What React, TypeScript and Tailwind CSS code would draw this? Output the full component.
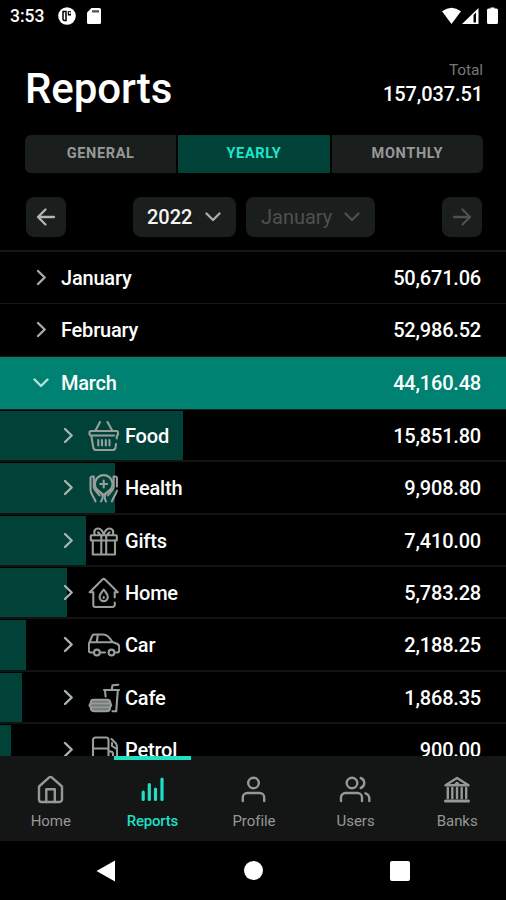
import type { ReactNode } from 'react';

const months = [
  { name: 'January', total: '50,671.06' },
  { name: 'February', total: '52,986.52' },
];

const stroke = {
  fill: 'none',
  stroke: 'currentColor',
  strokeWidth: 2.1,
  strokeLinecap: 'round' as const,
  strokeLinejoin: 'round' as const,
};

function CategoryIcon({ children }: { children: ReactNode }) {
  return (
    <svg width="32" height="32" viewBox="0 0 32 32" {...stroke} className="shrink-0 text-[#979e9c]">
      {children}
    </svg>
  );
}

const categories = [
  {
    name: 'Food',
    total: '15,851.80',
    bar: 183,
    icon: (
      <CategoryIcon>
        <path d="M12 2L7.500 10.500M19.500 2L24.200 10.500" />
        <path d="M28.800 18.500V16L30 14.500V12.500A1.500 1.500 0 0 0 28.500 11H3A1.500 1.500 0 0 0 1.500 12.500V14A1.500 1.500 0 0 0 3 15.500H26" />
        <path d="M3.300 16L5.300 27.500A3 3 0 0 0 8 30H24.500A3 3 0 0 0 27.500 27.500L28 24" />
        <path d="M10.300 20V25.500M14 20V25.500M17.800 20V25.500M21.500 20V25.500" />
      </CategoryIcon>
    ),
  },
  {
    name: 'Health',
    total: '9,908.80',
    bar: 115,
    icon: (
      <CategoryIcon>
        <path d="M8.500 17A8.800 8.800 0 1 1 22.900 17C21.500 19.500 18.500 20.500 15.700 23C12.900 20.500 9.900 19.500 8.500 17" />
        <path d="M15.700 8.500V15.500M12.200 12H19.200" />
        <path d="M5.800 4.500H4.200Q2.500 4.500 2.500 6.200V18C2.500 22 6 24.500 7.500 29.500M5.800 4.500V15C5.800 17.500 9 20 11.500 23.500M8.500 17L13.500 21.500C15.500 24 15 26.500 13 29.500" />
        <path d="M25.600 4.500H27.200Q28.900 4.500 28.900 6.200V14.500M28.900 18.500C28.500 22 25.400 24.500 23.900 29.500M25.600 4.500V15C25.600 17.500 22.400 20 19.900 23.500M22.900 17L17.900 21.500C15.900 24 16.400 26.500 18 29.500" />
      </CategoryIcon>
    ),
  },
  {
    name: 'Gifts',
    total: '7,410.00',
    bar: 86,
    icon: (
      <CategoryIcon>
        <rect x="2.800" y="10.300" width="26" height="5.200" rx=".6" />
        <path d="M4.800 15.500V29.500H27V15.500M13.300 10.500V29.500M18.200 10.500V29.500" />
        <path d="M7 10C5 6 7.500 3.200 10.500 3.500C13.500 4 15 7 15.700 9.800C16.500 7 18 4 21 3.500C24 3.200 26.500 6 24.500 10M10 7.300L12.500 10M21.500 7.300L19 10" />
      </CategoryIcon>
    ),
  },
  {
    name: 'Home',
    total: '5,783.28',
    bar: 67,
    icon: (
      <CategoryIcon>
        <path d="M5.300 15.200V28A2 2 0 0 0 7.300 30H24.500A2.300 2.300 0 0 0 26.800 27.700V25.500M26.700 20.500V15.200H29.800L17 2.500A1.900 1.900 0 0 0 14.400 2.500L1.700 15.200H5" />
        <path d="M15.700 12.500C13.500 15.500 11.600 17.300 11.600 20A4.100 4.100 0 0 0 19.800 20C19.800 17.300 17.900 15.500 15.700 12.500Z" />
        <path d="M15.700 20V21" />
      </CategoryIcon>
    ),
  },
  {
    name: 'Car',
    total: '2,188.25',
    bar: 26,
    icon: (
      <CategoryIcon>
        <path d="M5.500 23.500H2.500A2 2 0 0 1 .8 21.500V15L4.200 6.800A2 2 0 0 1 6 5.500H15.500C18.500 5.500 22 9 24.500 13L29 14.700C30.500 15.400 31.200 16.200 31.200 17.700V21.500A2 2 0 0 1 29.200 23.500H27M12.500 23.500H17M1.500 13.300H24M9.800 5.700L8.800 13" />
        <circle cx="8.900" cy="23.500" r="2.900" />
        <circle cx="23.500" cy="23.500" r="2.900" />
      </CategoryIcon>
    ),
  },
  {
    name: 'Cafe',
    total: '1,868.35',
    bar: 22,
    icon: (
      <CategoryIcon>
        <path d="M16 8H31M23.700 8L24.500 3.300L30.300 2.800M29.800 8.500L28.200 29.300H24.500M17 8.500L17.600 14.500" />
        <path d="M5.500 17.800H19C21 17.800 22.300 19 22.300 21L23.200 23.300L22 25.500C22 28 20.500 29.300 18.500 29.300H6.500C4 29.300 2.800 28 2.800 25.500L1.500 23.300L2.800 21C2.800 19 3.800 17.800 5.500 17.800Z" fill="#777c7b" />
        <path d="M3 21.500H22M3 25.300H22" strokeWidth="1.300" />
      </CategoryIcon>
    ),
  },
  {
    name: 'Petrol',
    total: '900.00',
    bar: 11,
    icon: (
      <CategoryIcon>
        <path d="M5 31V6A2.500 2.500 0 0 1 7.500 3.500H18A2.500 2.500 0 0 1 20.500 6V31M5 14.500H20.500" />
        <path d="M23.500 5L28 9.500C29 11 29 12 29 14V27M21 17.500H22.500A2.500 2.500 0 0 1 25 20V27M24 9V12L28.500 15" />
      </CategoryIcon>
    ),
  },
];

const tabs = [
  {
    label: 'Home',
    icon: (
      <>
        <path d="M3 11.500L13.500 2.200Q14.500 1.500 15.500 2.200L26 11.500V24.500A2.500 2.500 0 0 1 23.500 27H5.500A2.500 2.500 0 0 1 3 24.500Z" />
        <path d="M10.300 27V14.300H18.800V27" />
      </>
    ),
  },
  {
    label: 'Reports',
    icon: <path d="M5.200 17V24.500M11.300 9.600V24.500M17.500 14V24.500M24 4V24.500" strokeWidth="3.200" />,
  },
  {
    label: 'Profile',
    icon: (
      <>
        <circle cx="14.500" cy="8" r="5.300" />
        <path d="M3.800 26V22.500A4.500 4.500 0 0 1 8.300 18H20.700A4.500 4.500 0 0 1 25.200 22.500V26" />
      </>
    ),
  },
  {
    label: 'Users',
    icon: (
      <>
        <circle cx="11" cy="8" r="5.300" />
        <path d="M0 26V22.500A4.500 4.500 0 0 1 4.500 18H16.500A4.500 4.500 0 0 1 21 22.500V26M19.700 3A5.300 5.300 0 0 1 19.700 13M24.500 18.300C27 19.200 28.300 21 28.300 23.500V26" />
      </>
    ),
  },
  {
    label: 'Banks',
    icon: (
      <>
        <path d="M2.500 10.300L14 3L25.500 10.300Z" />
        <path d="M11 10L14 7.300L17 10" strokeWidth="1.500" />
        <path d="M4.800 13V23M9.300 13V23M14 13V23M18.700 13V23M23.200 13V23" strokeWidth="2.400" />
        <path d="M2.500 26H25.500" strokeWidth="3" />
      </>
    ),
  },
];

function Chevron({ down = false, className = '' }: { down?: boolean; className?: string }) {
  return (
    <svg width="18" height="18" viewBox="0 0 18 18" {...stroke} strokeWidth={2.4} className={`shrink-0 ${className}`}>
      <path d={down ? 'M2.500 5.500L9 12L15.500 5.500' : 'M6 2L12.700 8.500L6 15'} />
    </svg>
  );
}

function Arrow({ right = false }: { right?: boolean }) {
  return (
    <svg width="20" height="20" viewBox="0 0 20 20" {...stroke} strokeWidth={2.3}>
      <path d={right ? 'M2 10H18M10.500 2.500L18 10L10.500 17.500' : 'M18 10H2M9.500 2.500L2 10L9.500 17.500'} />
    </svg>
  );
}

function StatusBar() {
  return (
    <div className="flex h-8 shrink-0 items-center pl-[10px] pr-2">
      <span className="w-12 text-[17.5px] font-medium leading-8">3:53</span>
      <svg width="18" height="18" viewBox="0 0 18 18" className="-mt-px">
        <circle cx="9" cy="9" r="8.800" fill="#fff" />
        <path d="M5 4.500H8V13.500H6.500Q5 13.500 5 12Z" fill="none" stroke="#000" strokeWidth="1.500" />
        <path d="M9.800 4.200H13V8.500H9.800Z" fill="#000" />
        <circle cx="11.800" cy="6" r="1" fill="#fff" />
      </svg>
      <svg width="14" height="16" viewBox="0 0 14 16" className="ml-[11px] -mt-px">
        <path d="M4.500 0H12.500Q14 0 14 1.500V14.500Q14 16 12.500 16H1.500Q0 16 0 14.500V4.500Z" fill="#fff" />
        <path d="M5 2.200H12V4.500H5Z" fill="#555" />
      </svg>
      <svg width="57" height="18" viewBox="0 0 57 18" className="ml-auto -mt-px" fill="#fff">
        <path d="M1 4.200Q10.500-2.800 20 4.200L10.500 17Z" />
        <path d="M21 17L37.500 1V17Z" />
        <path d="M32.500 8V15.500H35V5.500Z" fill="#000" />
        <path d="M47.500 1.500H49.500V.5H53.500V1.500H55.500Q57 1.500 57 3V15.500Q57 17 55.500 17H47.500Q46 17 46 15.500V3Q46 1.500 47.500 1.500Z" />
      </svg>
    </div>
  );
}

export default function App() {
  return (
    <div className="flex h-[900px] w-[506px] flex-col overflow-hidden bg-black font-['Roboto',sans-serif] text-white">
      <StatusBar />

      <header className="flex h-[103px] shrink-0 justify-between pl-[25px] pr-[23px]">
        <h1 className="pt-[32px] text-[42px] font-medium leading-[50px] tracking-[-0.1px]">Reports</h1>
        <div className="pt-[28px] text-right">
          <div className="text-[15.5px] leading-[20px] tracking-[-0.1px] text-[#777]">Total</div>
          <div className="mt-[2px] text-[20px] font-medium leading-6 tracking-[-0.1px]">157,037.51</div>
        </div>
      </header>

      <div className="ml-[25px] mr-[23px] grid h-[37px] shrink-0 grid-cols-3 gap-[2px] text-center text-[14.5px] font-bold leading-[38px] tracking-[0.65px] text-[#969999]">
        <div className="rounded-l-[6px] bg-[#1a1e1d]">GENERAL</div>
        <div className="bg-[#004238] text-[#1fe5c8]">YEARLY</div>
        <div className="rounded-r-[6px] bg-[#1a1e1d]">MONTHLY</div>
      </div>

      <div className="mt-[25px] flex h-[40px] shrink-0 pl-[26px] pr-6">
        <button className="flex w-[40px] items-center justify-center rounded-[8px] bg-[#1a1e1d] text-[#b3b5b5]">
          <Arrow />
        </button>
        <button className="ml-[67px] flex w-[103px] items-center justify-between rounded-[8px] bg-[#1a1e1d] pl-[14px] pr-[14px] text-[20px] font-medium text-[#f4f4f4]">
          2022
          <Chevron down className="text-[#aaadad]" />
        </button>
        <button className="ml-[10px] flex w-[129px] items-center justify-between rounded-[8px] bg-[#1a1e1d] pl-[15px] pr-[14px] text-[20px] text-[#4d5150]">
          January
          <Chevron down />
        </button>
        <button className="ml-auto flex w-[40px] items-center justify-center rounded-[8px] bg-[#1a1e1d] text-[#4d5150]">
          <Arrow right />
        </button>
      </div>

      <main className="mt-[13px] h-[506px] shrink-0 overflow-hidden border-t-2 border-[#151716] text-[20px] font-medium tracking-[-0.2px]">
        {months.map((month) => (
          <div key={month.name} className="flex h-[52.3px] items-center border-b border-[#151716] pl-[32px] pr-[25px]">
            <Chevron className="text-[#a8abab]" />
            <span className="ml-[11px]">{month.name}</span>
            <span className="ml-auto">{month.total}</span>
          </div>
        ))}
        <div className="flex h-[53.4px] items-center border-b border-[#0b2722] bg-[#008272] pl-[32px] pr-[25px]">
          <Chevron down className="text-[#b8dfd9]" />
          <span className="ml-[11px]">March</span>
          <span className="ml-auto">44,160.48</span>
        </div>
        {categories.map((item) => (
          <div key={item.name} className="relative h-[52.35px] border-b-2 border-[#111413]">
            <div className="absolute bottom-0 left-0 top-px bg-[#004238]" style={{ width: item.bar }} />
            <div className="relative flex h-[52px] items-center pl-[59px] pr-[25px]">
              <Chevron className="text-[#a9b3b1]" />
              <span className="ml-[11px]">{item.icon}</span>
              <span className="ml-[5px]">{item.name}</span>
              <span className="ml-auto">{item.total}</span>
            </div>
          </div>
        ))}
      </main>

      <nav className="grid h-[85px] w-[508px] shrink-0 grid-cols-5 bg-[#141515] text-[#969797]">
        {tabs.map((tab) => {
          const active = tab.label === 'Reports';
          return (
            <div key={tab.label} className={`flex flex-col items-center ${active ? 'text-[#1fdfc4]' : ''}`}>
              <div className={`h-1 w-[77px] ${active ? 'bg-[#1fdfc4]' : ''}`} />
              <svg width="29" height="29" viewBox="0 0 29 29" {...stroke} strokeWidth={2.4} className="mt-[15px] overflow-visible">
                {tab.icon}
              </svg>
              <span className={`mt-[7px] text-[15px] leading-5 ${active ? 'font-medium tracking-[-0.2px]' : 'tracking-[-0.05px]'}`}>{tab.label}</span>
            </div>
          );
        })}
      </nav>

      <div className="flex h-[59px] items-center justify-between pl-[96px] pr-[96px]">
        <svg width="20" height="22" viewBox="0 0 20 22" fill="#fff">
          <path d="M0.500 11L19 .5V21.500Z" />
        </svg>
        <div className="h-[19px] w-[19px] rounded-full bg-white" />
        <div className="h-[20px] w-[20px] rounded-[2px] bg-white" />
      </div>
    </div>
  );
}
